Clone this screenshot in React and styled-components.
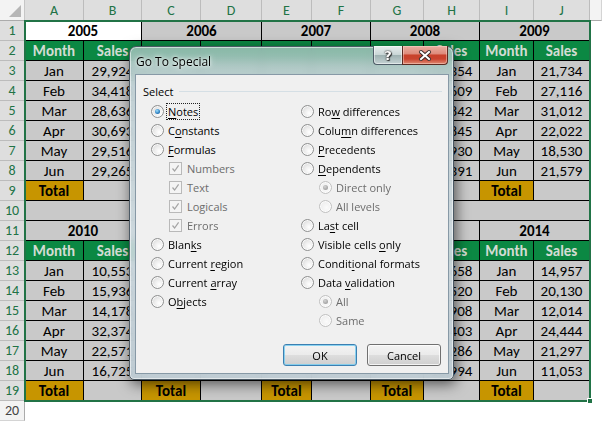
import React from "react";
import styled, { createGlobalStyle } from "styled-components";

const GlobalStyle = createGlobalStyle`
  html, body {
    margin: 0;
    padding: 0;
    background: #fff;
    overflow: hidden;
  }
  #root {
    position: relative;
    width: 602px;
    height: 421px;
  }
`;

const COL_WIDTHS = [59, 58, 59, 61, 50, 59, 53, 56, 54, 56];
const LETTERS = ["A", "B", "C", "D", "E", "F", "G", "H", "I", "J"];
const MONTHS = ["Jan", "Feb", "Mar", "Apr", "May", "Jun"];

// values in the middle tables sit behind the dialog; only column H peeks out
const TOP_TABLES = [
  { year: 2005, sales: ["29,924", "34,418", "28,636", "30,693", "29,516", "29,265"] },
  { year: 2006, sales: ["18,420", "25,117", "33,208", "21,765", "26,304", "19,882"] },
  { year: 2007, sales: ["27,531", "16,240", "29,873", "24,115", "31,648", "22,409"] },
  { year: 2008, sales: ["25,354", "31,609", "27,842", "22,845", "26,930", "28,391"] },
  { year: 2009, sales: ["21,734", "27,116", "31,012", "22,022", "18,530", "21,579"] },
];

const BOTTOM_TABLES = [
  { year: 2010, sales: ["10,553", "15,936", "14,178", "32,374", "22,571", "16,725"] },
  { year: 2011, sales: ["23,417", "19,802", "28,356", "17,249", "30,118", "25,660"] },
  { year: 2012, sales: ["14,690", "26,235", "20,481", "33,027", "18,774", "29,103"] },
  { year: 2013, sales: ["19,658", "23,520", "27,908", "15,403", "22,286", "18,994"] },
  { year: 2014, sales: ["14,957", "20,130", "12,014", "24,444", "21,297", "11,053"] },
];

const FILLS = {
  gray: "#c9c9c9",
  white: "#ffffff",
  green: "#0b8843",
  gold: "#c79500",
};

/* ---------- sheet ---------- */

const Sheet = styled.div`
  position: relative;
  display: grid;
  grid-template-columns: 25px ${COL_WIDTHS.map((w) => `${w}px`).join(" ")} 1fr;
  grid-template-rows: 21px repeat(20, 20px);
  width: 602px;
  height: 421px;
  overflow: hidden;
  font-family: Carlito, Calibri, "Liberation Sans", Arial, sans-serif;
  font-size: 14px;
  color: #000;
`;

const Corner = styled.div`
  position: relative;
  box-sizing: border-box;
  background: #f3f3f3;
  border-right: 1px solid #c6c6c6;
  border-bottom: 1px solid #ababab;

  &::after {
    content: "";
    position: absolute;
    right: 3px;
    bottom: 3px;
    width: 0;
    height: 0;
    border-left: 12px solid transparent;
    border-bottom: 12px solid #b6b6b6;
  }
`;

const ColHead = styled.div`
  box-sizing: border-box;
  display: flex;
  align-items: center;
  justify-content: center;
  background: ${(p) => (p.$selected ? "#dedede" : "#f3f3f3")};
  color: ${(p) => (p.$selected ? "#217346" : "#444")};
  border-right: 1px solid ${(p) => (p.$selected ? "#bcbcbc" : "#d4d4d4")};
  border-bottom: 1px solid #ababab;
  font-size: 14px;
`;

const RowHead = styled.div`
  box-sizing: border-box;
  display: flex;
  align-items: center;
  justify-content: center;
  background: ${(p) => (p.$selected ? "#dedede" : "#f3f3f3")};
  color: ${(p) => (p.$selected ? "#217346" : "#444")};
  border-right: 1px solid #ababab;
  border-bottom: 1px solid ${(p) => (p.$selected ? "#bcbcbc" : "#d4d4d4")};
  font-size: 14px;
`;

const Cell = styled.div`
  box-sizing: border-box;
  grid-column: span ${(p) => p.$span || 1};
  display: flex;
  align-items: center;
  justify-content: center;
  overflow: hidden;
  white-space: nowrap;
  background: ${(p) => FILLS[p.$fill || "gray"]};
  color: ${(p) => (p.$fill === "green" ? "#d3dcd3" : "#000")};
  font-weight: ${(p) => (p.$bold ? 700 : 400)};
  font-size: 15px;
  border-right: 1px solid #000;
  border-bottom: 1px solid #000;
`;

const Blank = styled.div`
  grid-column: span ${(p) => p.$span || 1};
  background: #fff;
`;

const Selection = styled.div`
  position: absolute;
  left: 24px;
  top: 20px;
  width: 567px;
  height: 382px;
  box-sizing: border-box;
  border: 2px solid #217346;
  pointer-events: none;
`;

const FillHandle = styled.div`
  position: absolute;
  left: 587px;
  top: 398px;
  width: 6px;
  height: 6px;
  box-sizing: border-box;
  background: #217346;
  border: 1px solid #fff;
`;

// columns C..G from the header row to the total row sit fully under the dialog
const covered = (tableIndex, col, rowInTable, startRow) => {
  if (rowInTable < 1) return false;
  if (rowInTable === 8 && startRow === 11) return false;
  return tableIndex === 1 || tableIndex === 2 || (tableIndex === 3 && col === 0);
};

function tableRows(tables, startRow) {
  const rows = [];
  const hide = (i, col, r) => covered(i, col, r, startRow);
  rows.push(
    tables.map((t, i) => (
      <Cell key={`y${i}`} $span={2} $bold $fill={startRow === 1 && i === 0 ? "white" : "gray"}>
        {startRow === 11 && i > 0 && i < 4 ? null : t.year}
      </Cell>
    ))
  );
  rows.push(
    tables.flatMap((t, i) => [
      <Cell key={`m${i}`} $fill="green" $bold>{hide(i, 0, 1) ? null : "Month"}</Cell>,
      <Cell key={`s${i}`} $fill="green" $bold>{hide(i, 1, 1) ? null : "Sales"}</Cell>,
    ])
  );
  MONTHS.forEach((m, r) => {
    rows.push(
      tables.flatMap((t, i) => [
        <Cell key={`m${i}`}>{hide(i, 0, r + 2) ? null : m}</Cell>,
        <Cell key={`v${i}`}>{hide(i, 1, r + 2) ? null : t.sales[r]}</Cell>,
      ])
    );
  });
  rows.push(
    tables.flatMap((t, i) => [
      <Cell key={`t${i}`} $fill="gold" $bold>{hide(i, 0, 8) ? null : "Total"}</Cell>,
      <Cell key={`e${i}`} />,
    ])
  );
  return rows;
}

function Spreadsheet() {
  const body = [
    ...tableRows(TOP_TABLES, 1),
    [<Cell key="gap" $span={10} />],
    ...tableRows(BOTTOM_TABLES, 11),
    [<Blank key="end" $span={10} />],
  ];

  return (
    <Sheet>
      <Corner />
      {LETTERS.map((l) => (
        <ColHead key={l} $selected>{l}</ColHead>
      ))}
      <ColHead />
      {body.map((cells, i) => (
        <React.Fragment key={i}>
          <RowHead $selected={i < 19}>{i + 1}</RowHead>
          {cells}
          <Blank />
        </React.Fragment>
      ))}
      <Selection />
      <FillHandle />
      <GoToSpecial />
    </Sheet>
  );
}

/* ---------- dialog ---------- */

const Frame = styled.div`
  position: absolute;
  left: 129px;
  top: 46px;
  width: 325px;
  height: 334px;
  box-sizing: border-box;
  display: flex;
  flex-direction: column;
  padding: 0 4px 5px 5px;
  border: 1px solid #4b5964;
  border-radius: 7px 7px 5px 5px;
  background: linear-gradient(
    180deg,
    rgba(150, 190, 178, 0.9) 0%,
    rgba(196, 212, 216, 0.9) 12%,
    rgba(206, 218, 224, 0.9) 60%,
    rgba(190, 204, 212, 0.92) 100%
  );
  backdrop-filter: blur(4px);
  box-shadow: inset 0 0 0 1px rgba(255, 255, 255, 0.55), 2px 4px 14px rgba(0, 0, 0, 0.6);
  font-family: "Open Sans", "Noto Sans", sans-serif;
  font-size: 11px;
  color: #000;
`;

const TitleBar = styled.div`
  height: 27px;
  display: flex;
  align-items: flex-start;
  justify-content: space-between;
`;

const Title = styled.div`
  padding: 6px 0 0 1px;
  font-size: 12px;
  text-shadow: 0 0 6px rgba(255, 255, 255, 0.95), 0 0 3px rgba(255, 255, 255, 0.9);
`;

const CaptionButtons = styled.div`
  display: flex;
  margin: -1px 1px 0 0;
`;

const HelpButton = styled.div`
  width: 29px;
  height: 19px;
  box-sizing: border-box;
  display: flex;
  align-items: center;
  justify-content: center;
  border: 1px solid #4f5d68;
  border-top: none;
  border-right: none;
  border-radius: 0 0 0 4px;
  background: linear-gradient(180deg, #e8eeee 0%, #c9d6d6 48%, #9fb2b2 52%, #c4d2d3 100%);
  box-shadow: inset 0 0 0 1px rgba(255, 255, 255, 0.5);
  color: #fff;
  font-family: "DejaVu Sans", sans-serif;
  font-weight: 700;
  font-size: 13px;
  text-shadow: 0 0 1px #222, 0 0 2px #333, 1px 1px 1px #333;
`;

const CloseButton = styled.div`
  width: 46px;
  height: 19px;
  box-sizing: border-box;
  display: flex;
  align-items: center;
  justify-content: center;
  border: 1px solid #5c2a21;
  border-top: none;
  border-radius: 0 0 4px 0;
  background: linear-gradient(180deg, #eab0a2 0%, #de8a7b 44%, #c8412b 50%, #c9432f 72%, #e08a72 100%);
  box-shadow: inset 0 0 0 1px rgba(255, 220, 210, 0.45);
`;

const Client = styled.div`
  flex: 1;
  display: flex;
  flex-direction: column;
  box-sizing: border-box;
  background: #f0f0f0;
  border: 1px solid #8799a6;
`;

const GroupLabel = styled.div`
  display: flex;
  align-items: center;
  height: 16px;
  margin: 8px 6px 0 7px;

  &::after {
    content: "";
    flex: 1;
    height: 1px;
    margin-left: 6px;
    background: #d5dfe5;
  }
`;

const Options = styled.div`
  display: grid;
  grid-template-columns: 150px 150px;
  margin: 3px 0 0 15px;
`;

const Column = styled.div`
  display: flex;
  flex-direction: column;
`;

const Option = styled.div`
  display: flex;
  align-items: center;
  height: 19px;
  padding-left: ${(p) => (p.$indent ? 18 : 0)}px;
  color: ${(p) => (p.$disabled ? "#6d6d6d" : "#000")};
  white-space: nowrap;
`;

const RadioMark = styled.span`
  position: relative;
  flex: none;
  width: 13px;
  height: 13px;
  box-sizing: border-box;
  margin-right: 4px;
  border-radius: 50%;
  border: 1px solid ${(p) => (p.$disabled ? "#c0c0c0" : "#8e8f8f")};
  background: ${(p) =>
    p.$disabled
      ? "radial-gradient(circle at 60% 60%, #fbfbfb 0%, #f0f0f0 60%, #e6e6e6 100%)"
      : "radial-gradient(circle at 65% 65%, #ffffff 0%, #ececec 45%, #cfcfcf 100%)"};
  box-shadow: inset 0 0 0 1px rgba(255, 255, 255, 0.8);

  &::after {
    content: "";
    display: ${(p) => (p.$checked ? "block" : "none")};
    position: absolute;
    left: 3px;
    top: 3px;
    width: 5px;
    height: 5px;
    border-radius: 50%;
    background: ${(p) =>
      p.$disabled
        ? "radial-gradient(circle at 40% 35%, #d4d4d4, #8d8d8d)"
        : "radial-gradient(circle at 40% 35%, #9fe0ff, #2d7fc0 60%, #164f84)"};
  }
`;

const CheckMark = styled.span`
  flex: none;
  display: flex;
  width: 13px;
  height: 13px;
  box-sizing: border-box;
  margin-right: 5px;
  border: 1px solid #b9b9b9;
  background: #f4f4f4;
`;

const LabelText = styled.span`
  display: flex;
`;

const Key = styled.span`
  text-decoration: underline;
  text-underline-offset: 2px;
`;

const Focused = styled.span`
  display: flex;
  margin-left: -2px;
  padding: 0 1px;
  line-height: 15px;
  border: 1px dotted #222;
`;

const ButtonRow = styled.div`
  display: flex;
  justify-content: flex-end;
  gap: 10px;
  margin-top: auto;
  padding: 0 7px 7px 0;
`;

const PushButton = styled.div`
  width: 74px;
  height: 22px;
  box-sizing: border-box;
  display: flex;
  align-items: center;
  justify-content: center;
  border: 1px solid ${(p) => (p.$default ? "#3c7fb1" : "#707070")};
  border-radius: 3px;
  background: linear-gradient(180deg, #f3f3f3 0%, #ebebeb 48%, #dddddd 52%, #cfcfcf 100%);
  box-shadow: inset 0 0 0 1px ${(p) => (p.$default ? "rgba(120, 205, 240, 0.85)" : "rgba(255, 255, 255, 0.75)")};
`;

function Label({ text, accel }) {
  if (accel == null) return <LabelText>{text}</LabelText>;
  const before = text.slice(0, accel);
  const after = text.slice(accel + 1);
  return (
    <LabelText>
      {before && <span>{before.replace(/ $/, "\u00a0")}</span>}
      <Key>{text[accel]}</Key>
      {after && <span>{after.replace(/^ /, "\u00a0")}</span>}
    </LabelText>
  );
}

function Radio({ text, accel, checked, disabled, dim, indent, focused }) {
  const label = <Label text={text} accel={accel} />;
  return (
    <Option $indent={indent} $disabled={disabled}>
      <RadioMark $checked={checked} $disabled={dim} />
      {focused ? <Focused>{label}</Focused> : label}
    </Option>
  );
}

function Check({ text }) {
  return (
    <Option $indent $disabled>
      <CheckMark>
        <svg width="11" height="11" viewBox="0 0 11 11">
          <path d="M2.5 5.5 L4.6 8 L8.6 2.4" fill="none" stroke="#a4a4a4" strokeWidth="1.2" />
        </svg>
      </CheckMark>
      {text}
    </Option>
  );
}

function GoToSpecial() {
  return (
    <Frame>
      <TitleBar>
        <Title>Go To Special</Title>
        <CaptionButtons>
          <HelpButton>?</HelpButton>
          <CloseButton>
            <svg width="14" height="11" viewBox="0 0 14 11">
              <path d="M3 2 L11 9 M11 2 L3 9" stroke="#3a2a28" strokeWidth="4" strokeLinecap="round" />
              <path d="M3 2 L11 9 M11 2 L3 9" stroke="#fff" strokeWidth="2" strokeLinecap="square" />
            </svg>
          </CloseButton>
        </CaptionButtons>
      </TitleBar>
      <Client>
        <GroupLabel>Select</GroupLabel>
        <Options>
          <Column>
            <Radio text="Notes" accel={0} checked focused />
            <Radio text="Constants" accel={1} />
            <Radio text="Formulas" accel={0} />
            <Check text="Numbers" />
            <Check text="Text" />
            <Check text="Logicals" />
            <Check text="Errors" />
            <Radio text="Blanks" accel={4} />
            <Radio text="Current region" accel={8} />
            <Radio text="Current array" accel={8} />
            <Radio text="Objects" accel={1} />
          </Column>
          <Column>
            <Radio text="Row differences" accel={2} />
            <Radio text="Column differences" accel={4} />
            <Radio text="Precedents" accel={0} />
            <Radio text="Dependents" accel={0} />
            <Radio text="Direct only" indent disabled checked dim />
            <Radio text="All levels" indent disabled dim />
            <Radio text="Last cell" accel={2} />
            <Radio text="Visible cells only" accel={14} />
            <Radio text="Conditional formats" accel={6} />
            <Radio text="Data validation" accel={5} />
            <Radio text="All" indent disabled checked dim />
            <Radio text="Same" indent disabled dim />
          </Column>
        </Options>
        <ButtonRow>
          <PushButton $default>OK</PushButton>
          <PushButton>Cancel</PushButton>
        </ButtonRow>
      </Client>
    </Frame>
  );
}

export default function App() {
  return (
    <>
      <GlobalStyle />
      <Spreadsheet />
    </>
  );
}
